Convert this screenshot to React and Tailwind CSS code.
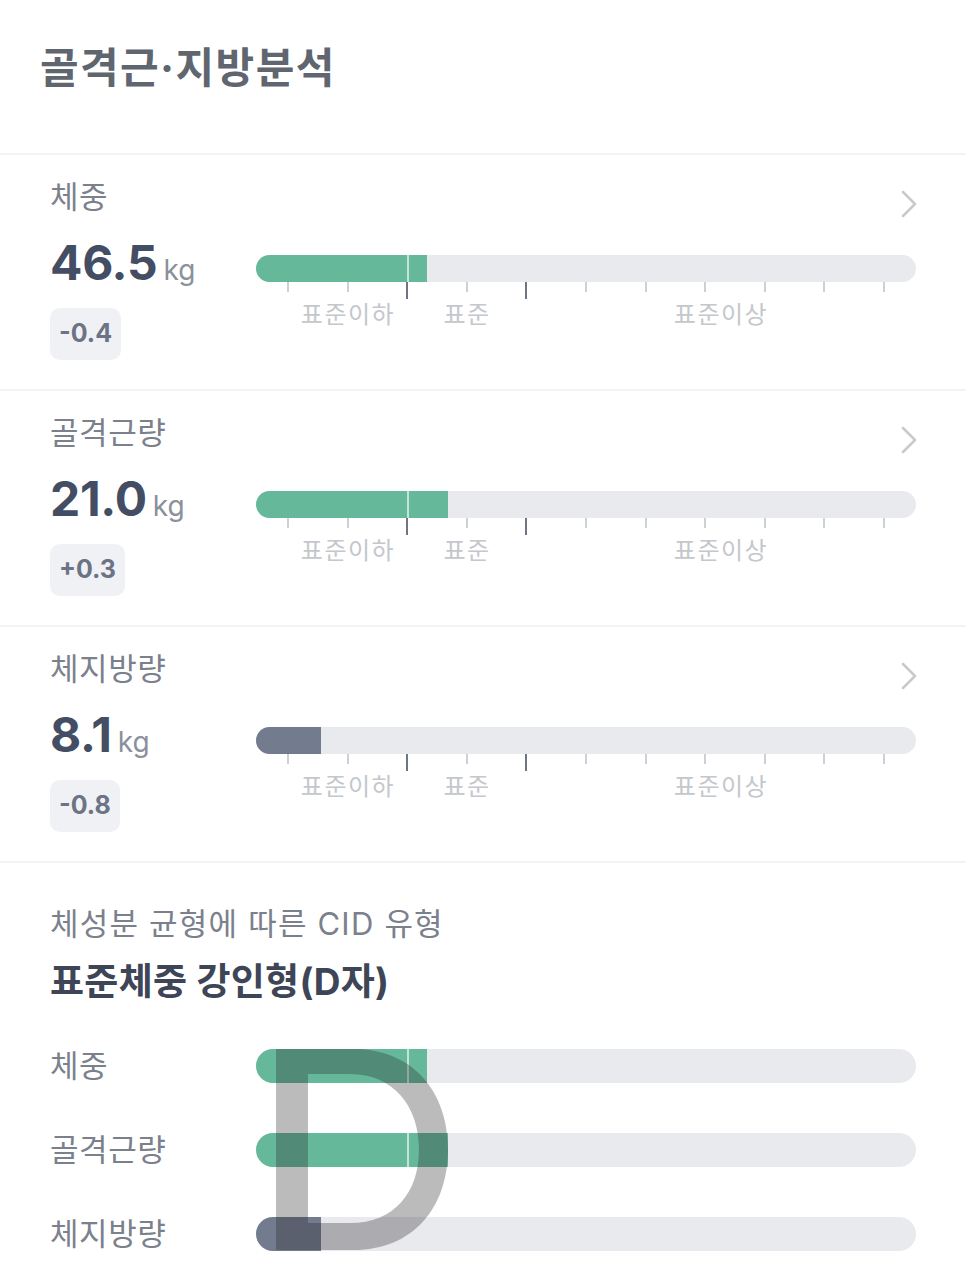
const font = { fontFamily: 'Inter, "Noto Sans CJK KR", sans-serif' };

const metrics = [
  { label: "체중", value: "46.5", diff: "-0.4", fill: 171, color: "bg-[#66b89a]" },
  { label: "골격근량", value: "21.0", diff: "+0.3", fill: 192, color: "bg-[#66b89a]" },
  { label: "체지방량", value: "8.1", diff: "-0.8", fill: 65, color: "bg-[#737c8f]" },
];

const ticks = [false, false, true, false, true, false, false, false, false, false, false];

function Chevron() {
  return (
    <svg width="18" height="30" viewBox="0 0 18 30" className="mt-[12px] mr-[-2px]">
      <path d="M3 3 L15 15 L3 27" fill="none" stroke="#c9cacf" strokeWidth="2.6" strokeLinecap="round" strokeLinejoin="round" />
    </svg>
  );
}

function Bar({ fill, color, height }) {
  return (
    <div className={`relative w-full ${height} rounded-full bg-[#e9eaee] overflow-hidden`}>
      <div className={`h-full ${color}`} style={{ width: fill }} />
      {fill > 153 && <div className="absolute left-[151px] top-0 h-full w-[2px] bg-white/60" />}
    </div>
  );
}

function Scale() {
  return (
    <div>
      <div className="flex justify-between px-[31px] h-[18px]">
        {ticks.map((dark, i) =>
          dark ? (
            <div key={i} className="w-[2px] h-[17px] bg-[#6f7683]" />
          ) : (
            <div key={i} className="w-[2px] h-[10px] bg-[#cdd0d5]" />
          )
        )}
      </div>
      <div className="relative h-[30px] text-[24px] leading-[30px] tracking-[1.5px] text-[#c4c7cc]">
        <span className="absolute left-[92px] -translate-x-1/2 whitespace-nowrap">표준이하</span>
        <span className="absolute left-[211px] -translate-x-1/2 whitespace-nowrap">표준</span>
        <span className="absolute left-[465px] -translate-x-1/2 whitespace-nowrap">표준이상</span>
      </div>
    </div>
  );
}

function Metric({ m }) {
  return (
    <section className="h-[236px] border-b-2 border-[#f2f3f5] px-[50px] pt-[22px]">
      <div className="flex justify-between items-start">
        <span className="text-[31px] leading-[40px] tracking-[0.6px] text-[#7b818c]">{m.label}</span>
        <Chevron />
      </div>
      <div className="flex mt-[16px]">
        <div className="w-[206px] shrink-0">
          <div className="flex items-baseline h-[56px]">
            <span className="text-[48px] leading-[56px] font-bold tracking-[-0.3px] text-[#434d63]">{m.value}</span>
            <span className="ml-[6px] text-[28px] text-[#8b919b]">kg</span>
          </div>
          <div className="mt-[17px] inline-flex items-center h-[52px] px-[9px] rounded-[10px] bg-[#f0f1f4] text-[25px] font-bold text-[#6b7385]">
            {m.diff}
          </div>
        </div>
        <div className="flex-1 pt-[20px]">
          <Bar fill={m.fill} color={m.color} height="h-[27px]" />
          <Scale />
        </div>
      </div>
    </section>
  );
}

export default function App() {
  return (
    <div className="w-[966px] min-h-[1279px] bg-white" style={font}>
      <header className="h-[155px] border-b-2 border-[#f2f3f5] px-[40px] pt-[44px]">
        <h1 className="text-[42px] leading-[48px] font-bold tracking-[1.4px] text-[#5f6670]">골격근·지방분석</h1>
      </header>
      {metrics.map((m) => (
        <Metric key={m.label} m={m} />
      ))}
      <section className="relative px-[50px] pt-[41px] pb-[30px]">
        <p className="text-[31px] leading-[40px] tracking-[1.2px] text-[#7b818c]">체성분 균형에 따른 CID 유형</p>
        <h2 className="mt-[16px] text-[37px] leading-[44px] font-bold tracking-[0.3px] text-[#3d4556]">표준체중 강인형(D자)</h2>
        <div className="mt-[45px] flex flex-col gap-[50px]">
          {metrics.map((m) => (
            <div key={m.label} className="flex items-center h-[34px]">
              <span className="w-[206px] shrink-0 text-[31px] leading-[40px] tracking-[0.6px] text-[#7b818c]">{m.label}</span>
              <Bar fill={m.fill} color={m.color} height="h-[34px]" />
            </div>
          ))}
        </div>
        <svg width="172" height="201" viewBox="0 0 172 201" className="absolute left-[276px] top-[186px]">
          <path
            fillRule="evenodd"
            fill="rgba(35,35,40,0.31)"
            d="M0 0 H78 C136 0 172 42 172 100 C172 160 136 201 78 201 H0 Z M32 25 H74 C118 25 143 58 143 100 C143 144 118 174 74 174 H32 Z"
          />
        </svg>
      </section>
    </div>
  );
}
